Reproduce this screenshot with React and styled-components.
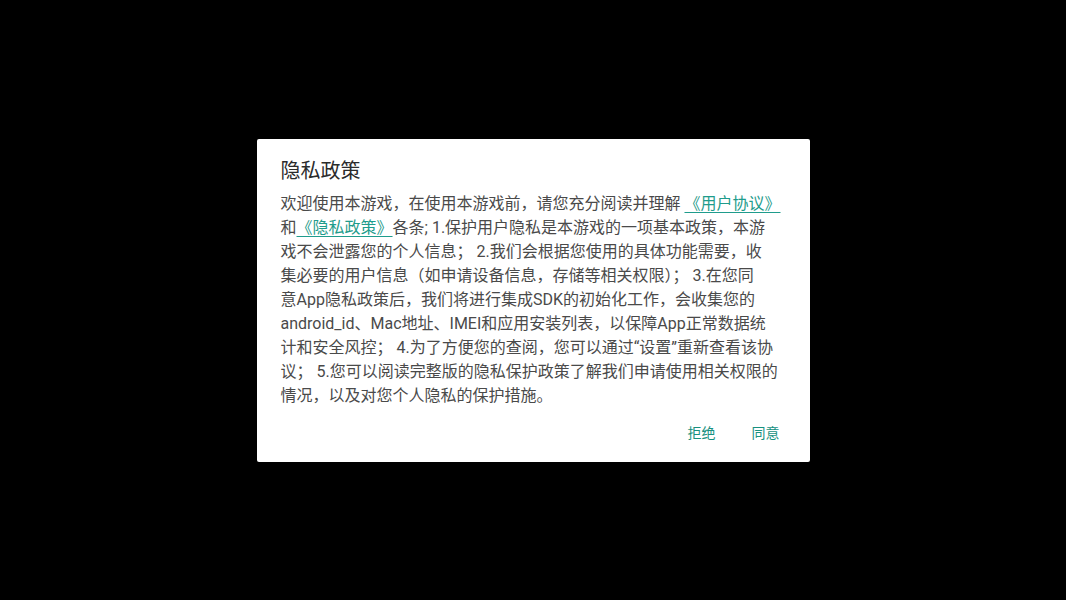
//IMPORTS
//-Modules
import React from 'react'
import styled, { createGlobalStyle } from 'styled-components'


//STYLES
//-Global
const GlobalStyle = createGlobalStyle`
    html, body, #root{
        margin: 0;
        padding: 0;
        width: 100%;
        height: 100%;
        background: #000000;
    }
    body{
        font-family: Roboto, "Noto Sans CJK SC", "Noto Sans", sans-serif;
    }
`
//-Components
const Overlay = styled.div`
    width: 100vw;
    height: 100vh;
    display: flex;
    align-items: center;
    justify-content: center;
    background: #000000;
`
const Dialog = styled.div`
    width: 553px;
    height: 323px;
    box-sizing: border-box;
    background: #ffffff;
    border-radius: 2px;
    display: flex;
    flex-direction: column;
    padding-top: 18px;
`
const Title = styled.h2`
    margin: 0;
    padding: 0 24px;
    font-size: 20px;
    line-height: 28px;
    font-weight: 400;
    color: #2b2b2b;
`
const Message = styled.p`
    margin: 7px 0 0 0;
    padding: 0 24px;
    font-size: 16px;
    line-height: 24px;
    color: #4a4a4a;
    white-space: nowrap;
`
const Link = styled.a`
    color: #1f9c8c;
    text-decoration: underline;
    text-decoration-thickness: 1px;
    text-underline-offset: 3px;
    cursor: pointer;
`
const ButtonBar = styled.div`
    display: flex;
    justify-content: flex-end;
    padding: 6px 12px 12px 12px;
`
const DialogButton = styled.button`
    min-width: 64px;
    height: 36px;
    padding: 0 8px;
    border: none;
    background: transparent;
    font-family: inherit;
    font-size: 14px;
    font-weight: 400;
    color: ${({ $accent }) => $accent || '#17917f'};
    cursor: pointer;
`


//MAIN COMPONENT
const App = () => {

    return (
        <>
            <GlobalStyle />
            <Overlay>
                <Dialog>
                    <Title>隐私政策</Title>

                    <Message>
                        欢迎使用本游戏，在使用本游戏前，请您充分阅读并理解 <Link>《用户协议》</Link><br />
                        和<Link>《隐私政策》</Link>各条; 1.保护用户隐私是本游戏的一项基本政策，本游<br />
                        戏不会泄露您的个人信息； 2.我们会根据您使用的具体功能需要，收<br />
                        集必要的用户信息（如申请设备信息，存储等相关权限）； 3.在您同<br />
                        意App隐私政策后，我们将进行集成SDK的初始化工作，会收集您的<br />
                        android_id、Mac地址、IMEI和应用安装列表，以保障App正常数据统<br />
                        计和安全风控； 4.为了方便您的查阅，您可以通过“设置”重新查看该协<br />
                        议； 5.您可以阅读完整版的隐私保护政策了解我们申请使用相关权限的<br />
                        情况，以及对您个人隐私的保护措施。
                    </Message>

                    <ButtonBar>
                        <DialogButton>拒绝</DialogButton>
                        <DialogButton>同意</DialogButton>
                    </ButtonBar>
                </Dialog>
            </Overlay>
        </>
    )
}
export default App
